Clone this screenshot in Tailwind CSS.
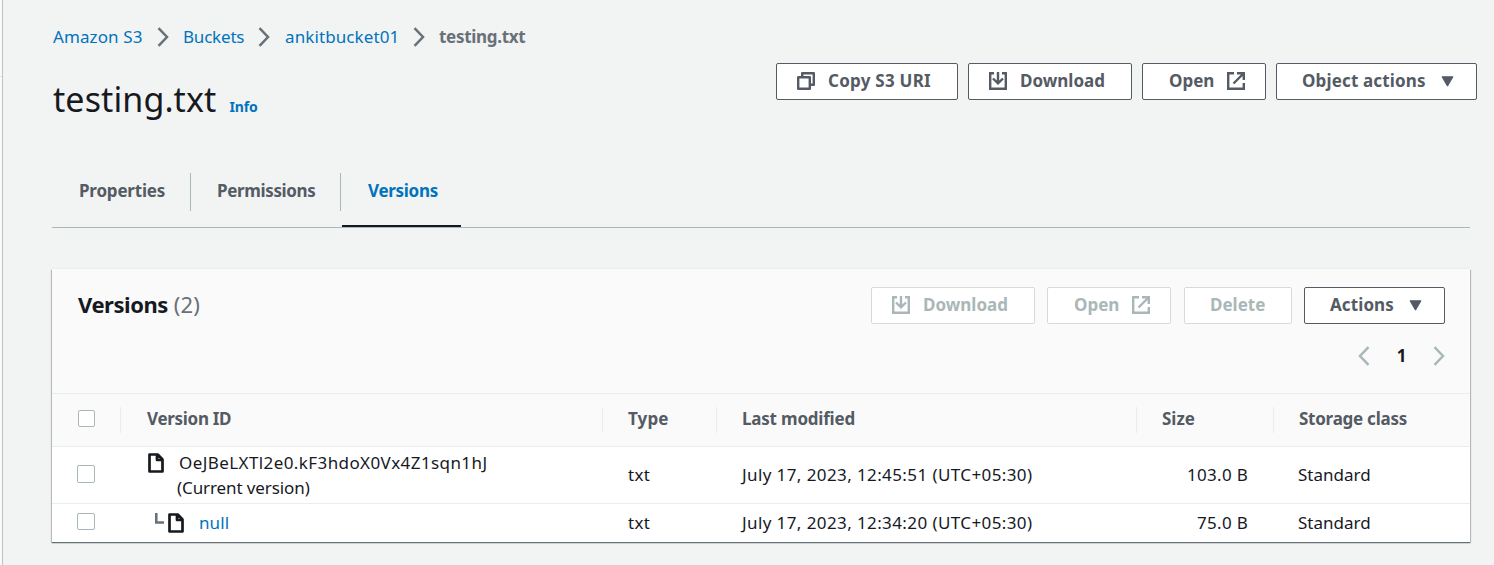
<!DOCTYPE html>
<html lang="en">
<head>
<meta charset="utf-8">
<title>testing.txt - S3 bucket</title>
<script src="https://cdn.jsdelivr.net/npm/@tailwindcss/browser@4"></script>
</head>
<body class="flex h-[565px] overflow-hidden bg-[#f2f3f3] font-['Noto_Sans','Open_Sans',sans-serif] text-[17px] leading-[25px] text-[#16191f]">
<svg class="hidden">
  <symbol id="chev" viewBox="0 0 12 20"><path d="M1.5 1.2 10 10l-8.500 8.800" fill="none" stroke="currentColor" stroke-width="2.500"/></symbol>
  <symbol id="copy" viewBox="0 0 18 18"><path d="M1.200 5.200h11.600v11.600H1.200zM5.200 5V1.200h11.600v11.600H13" fill="none" stroke="currentColor" stroke-width="2.400" stroke-linejoin="round"/></symbol>
  <symbol id="down" viewBox="0 0 18 18"><path d="M5 1.200H1.200v15.600h15.600V1.200H13M9 0v11M4 6.500 9 11.300l5-4.800" fill="none" stroke="currentColor" stroke-width="2.400"/></symbol>
  <symbol id="ext" viewBox="0 0 18 18"><path d="M7 1.200H1.200v15.600h15.600V11M10 1.200h6.800V8M16.500 1.500 6.500 11.500" fill="none" stroke="currentColor" stroke-width="2.400"/></symbol>
  <symbol id="file" viewBox="0 0 16 20"><path d="M1.500 1.500h8.200l4.800 5v12h-13zM9 1.500V7h5.500" fill="none" stroke="currentColor" stroke-width="2.700" stroke-linejoin="round"/></symbol>
  <symbol id="tri" viewBox="0 0 13 11"><path d="M1 .8h11L6.500 10.200z" fill="currentColor" stroke="currentColor" stroke-linejoin="round"/></symbol>
</svg>
<aside class="h-full w-[3px] shrink-0 border-r border-[#bcc4c5] bg-[#fafafa] pt-[76px]"><div class="h-px bg-[#dfe3e3]"></div></aside>
<main class="flex w-[1474px] shrink-0 flex-col pl-[49px]">
  <div class="flex h-[145px] justify-between">
    <div class="pl-px">
      <nav class="mt-6 flex h-[25px] items-center text-[#0073bb]">
        <a class="w-[104px] tracking-[0.1px]">Amazon S3</a>
        <svg class="h-5 w-3 text-[#687078]"><use href="#chev"/></svg>
        <a class="ml-[14px] w-[75px] tracking-[-0.2px]">Buckets</a>
        <svg class="h-5 w-3 text-[#687078]"><use href="#chev"/></svg>
        <a class="ml-[15px] w-[128px] tracking-[0.1px]">ankitbucket01</a>
        <svg class="h-5 w-3 text-[#687078]"><use href="#chev"/></svg>
        <span class="ml-[14px] font-bold tracking-[-0.3px] text-[#687078]">testing.txt</span>
      </nav>
      <div class="mt-[27px] flex items-baseline gap-[13px]">
        <h1 class="text-[34px] leading-[46px] tracking-[0.1px]">testing.txt</h1>
        <a class="text-[14px] font-bold tracking-[-0.1px] text-[#0073bb]">Info</a>
      </div>
    </div>
    <div class="mt-[63px] flex h-[37px] gap-[10px] font-bold text-[#545b64] [&>button]:flex [&>button]:items-center [&>button]:rounded-[2px] [&>button]:border [&>button]:border-[#545b64] [&>button]:bg-white [&>button]:pb-px [&>button_span]:pb-px">
      <button class="w-[182px] pl-5"><svg class="mr-[13px] size-[18px]"><use href="#copy"/></svg><span class="tracking-[0.25px]">Copy S3 URI</span></button>
      <button class="w-[164px] pl-5"><svg class="mr-[13px] size-[18px]"><use href="#down"/></svg><span>Download</span></button>
      <button class="w-[124px] pl-[26px]"><span class="w-[58px] text-left">Open</span><svg class="size-[18px]"><use href="#ext"/></svg></button>
      <button class="w-[201px] pl-[25px]"><span class="w-[139px] text-left tracking-[0.15px]">Object actions</span><svg class="h-[11px] w-[13px]"><use href="#tri"/></svg></button>
    </div>
  </div>
  <div class="mr-[7px] mt-7 flex h-[55px] border-b border-[#aab7b8] font-bold text-[#545b64]">
    <div class="h-[38px] w-[139px] border-r border-[#aab7b8] pl-[27px] pt-[5px] tracking-[-0.2px]">Properties</div>
    <div class="h-[38px] w-[150px] border-r border-[#aab7b8] pl-[26px] pt-[5px] tracking-[-0.35px]">Permissions</div>
    <div class="ml-px w-[119px] border-b-2 border-[#16191f] pl-[26px] pt-[5px] tracking-[-0.3px] text-[#0073bb]">Versions</div>
  </div>
  <section class="mr-[7px] mt-[41px] flex h-[273px] flex-col bg-white shadow-[0_1px_1px_#687078,1px_1px_1px_#c3cbcb,-1px_1px_1px_#c3cbcb,0_-1px_0_#eaeded]">
    <div class="flex h-[125px] justify-between border-b border-[#eaeded] bg-[#fafafa] pl-[26px] pr-[25px]">
      <h2 class="pt-5 text-[22px] leading-[30px]"><span class="font-bold tracking-[-0.45px]">Versions</span> <span class="tracking-[0.2px] text-[#687078]">(2)</span></h2>
      <div class="flex flex-col items-end">
        <div class="mt-[18px] flex h-[37px] font-bold text-[#aab7b8] [&>button]:flex [&>button]:items-center [&>button]:rounded-[2px] [&>button]:border [&>button]:border-[#d5dbdb] [&>button]:bg-white [&>button]:pb-px [&>button_span]:pb-px">
          <button class="mr-3 w-[164px] pl-5"><svg class="mr-[13px] size-[18px]"><use href="#down"/></svg><span>Download</span></button>
          <button class="mr-[13px] w-[124px] pl-[26px]"><span class="w-[58px] text-left">Open</span><svg class="size-[18px]"><use href="#ext"/></svg></button>
          <button class="mr-3 w-[108px] pl-[25px]"><span>Delete</span></button>
          <button class="w-[141px] border-[#545b64]! pl-[25px] text-[#545b64]"><span class="w-[79px] text-left tracking-[0.1px]">Actions</span><svg class="h-[11px] w-[13px]"><use href="#tri"/></svg></button>
        </div>
        <div class="mt-[19px] flex h-[25px] w-[87px] items-center justify-between text-[#aab7b8]">
          <svg class="h-5 w-3 rotate-180"><use href="#chev"/></svg>
          <span class="pb-px font-bold text-[#16191f]">1</span>
          <svg class="h-5 w-3"><use href="#chev"/></svg>
        </div>
      </div>
    </div>
    <div class="grid h-[53px] grid-cols-[69px_482px_114px_420px_137px_1fr] border-b border-[#eaeded] bg-[#fafafa] pt-[13px] font-bold text-[#545b64] [&>div]:h-[26px] [&>div]:border-r [&>div]:border-[#eaeded] [&>div]:pl-[25px] [&>div]:leading-6">
      <div class="pl-[26px]! pt-[3px]"><i class="block size-[17px] rounded-[2px] border border-[#aab7b8] bg-white"></i></div>
      <div class="pl-[26px]! tracking-[-0.3px]">Version ID</div><div class="tracking-[0.1px]">Type</div><div class="tracking-[-0.2px]">Last modified</div><div>Size</div><div class="border-r-0! tracking-[-0.25px]">Storage class</div>
    </div>
    <div class="grid h-[57px] grid-cols-[69px_482px_114px_420px_137px_1fr] items-center border-b border-[#eaeded] [&>div]:pb-[2px]">
      <div class="pl-[25px]"><i class="block size-[18px] rounded-[2px] border border-[#aab7b8] bg-white"></i></div>
      <div class="flex pb-0! pl-[27px]"><svg class="mt-[3px] h-5 w-4"><use href="#file"/></svg><div class="pl-[14px]"><div class="pl-px tracking-[0.41px]">OeJBeLXTl2e0.kF3hdoX0Vx4Z1sqn1hJ</div><div class="-ml-px tracking-[-0.1px]">(Current version)</div></div></div>
      <div class="pl-[25px] tracking-[0.3px]">txt</div><div class="pl-[25px] tracking-[0.4px]">July 17, 2023, 12:45:51 (UTC+05:30)</div><div class="pr-[26px] text-right tracking-[0.3px]">103.0 B</div><div class="pl-6">Standard</div>
    </div>
    <div class="grid h-[38px] grid-cols-[69px_482px_114px_420px_137px_1fr] items-center [&>div]:pb-[2px]">
      <div class="pb-1! pl-[25px]"><i class="block h-[17px] w-[18px] rounded-[2px] border border-[#aab7b8] bg-white"></i></div>
      <div class="flex items-center pl-[34px]"><svg class="mb-[7px] h-[11px] w-[9px]" viewBox="0 0 9 11"><path d="M1.200 0v9.500H9" fill="none" stroke="#687078" stroke-width="2.700"/></svg><svg class="ml-1 mt-px h-5 w-4"><use href="#file"/></svg><a class="pl-[15px] tracking-[0.1px] text-[#0073bb]">null</a></div>
      <div class="pl-[25px] tracking-[0.3px]">txt</div><div class="pl-[25px] tracking-[0.4px]">July 17, 2023, 12:34:20 (UTC+05:30)</div><div class="pr-[26px] text-right tracking-[0.3px]">75.0 B</div><div class="pl-6">Standard</div>
    </div>
  </section>
</main>
</body>
</html>
